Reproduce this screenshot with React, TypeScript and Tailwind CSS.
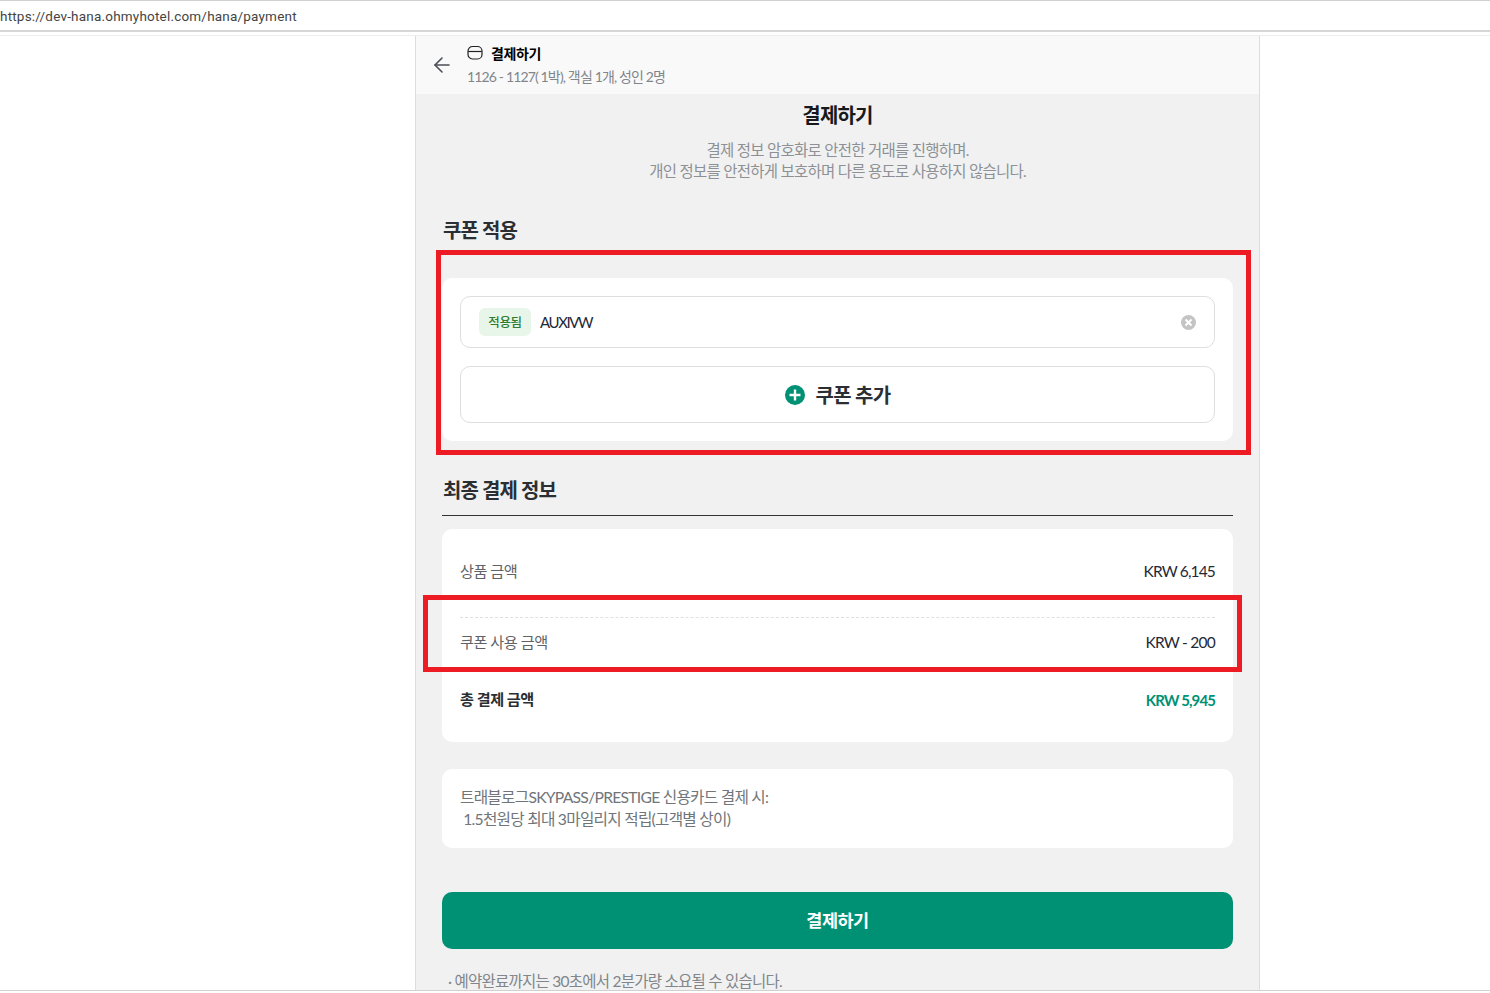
import React from 'react';
import { ArrowLeft } from 'lucide-react';

const font = "font-['Lato','Noto_Sans_CJK_KR',sans-serif]";

const App = () => {
  return (
    <div className={`relative h-[993px] overflow-hidden bg-white ${font}`}>
      {/* address bar */}
      <div className="h-[32px] border-t border-b-2 border-t-[#d0d0d0] border-b-[#d6d6d6] flex items-center pt-[1px]">
        <span className="text-[13.5px] text-[#444] font-['Roboto',sans-serif] tracking-[0.2px]">https://dev-hana.ohmyhotel.com/hana/payment</span>
      </div>
      <div className="h-[4px] border-b border-[#eeeeee]" />

      <div className="w-[845px] ml-[415px] h-[954px] border-x border-[#dcdcdc] bg-[#f1f1f1] overflow-hidden">
        {/* header */}
        <header className="h-[58px] bg-[#f9f9f9] flex items-center pl-[14px]">
          <ArrowLeft size={24} strokeWidth={1.6} className="text-[#4a4f54]" />
          <div className="ml-[13px]">
            <div className="flex items-center gap-[8px] h-[20px]">
              <svg width="16" height="16" viewBox="0 0 16 16" fill="none" stroke="#222" strokeWidth="1.2" className="mt-[-1px]">
                <rect x="1" y="1.5" width="14" height="12.5" rx="4.5" />
                <path d="M1.2 6.5h13.6" />
              </svg>
              <span className="text-[14px] font-bold text-black tracking-[-0.4px]">결제하기</span>
            </div>
            <div className="text-[14px] text-[#80868b] tracking-[-0.85px] mt-[4px] leading-[20px]">1126 - 1127( 1박), 객실 1개, 성인 2명</div>
          </div>
        </header>

        <main className="px-[26px]">
          <h1 className="text-center text-[20px] font-bold text-[#17191c] tracking-[-0.8px] leading-[28px] mt-[7px]">결제하기</h1>
          <p className="text-center text-[15.5px] leading-[21px] text-[#8d9196] tracking-[-0.75px] mt-[11px]">
            결제 정보 암호화로 안전한 거래를 진행하며.
            <br />
            개인 정보를 안전하게 보호하며 다른 용도로 사용하지 않습니다.
          </p>

          <h2 className="text-[20px] font-bold text-[#2b2f33] tracking-[-0.9px] leading-[28px] mt-[34px] ml-[1px]">쿠폰 적용</h2>
          <section className="bg-white rounded-[10px] mt-[34px] h-[163px] p-[18px] flex flex-col gap-[18px]">
            <div className="h-[52px] border border-[#dedede] rounded-[10px] flex items-center pl-[18px] pr-[18px]">
              <span className="h-[28px] w-[52px] rounded-[6px] bg-[#e8f5e9] text-[#2e7d32] text-[12.5px] font-medium flex items-center justify-center tracking-[-0.4px] pt-[3px]">적용됨</span>
              <span className="ml-[9px] text-[15px] text-[#1f2937] tracking-[-1.4px]">AUXIVW</span>
              <span className="ml-auto w-[15px] h-[15px] rounded-full bg-[#c4c4c4] flex items-center justify-center">
                <svg width="9" height="9" viewBox="0 0 9 9" stroke="white" strokeWidth="2">
                  <path d="M1.5 1.5l6 6M7.5 1.5l-6 6" />
                </svg>
              </span>
            </div>
            <button className="h-[57px] border border-[#dedede] rounded-[10px] flex items-center justify-center gap-[11px]">
              <svg width="20" height="20" viewBox="0 0 20 20">
                <circle cx="10" cy="10" r="10" fill="#009175" />
                <path d="M10 4.5v11M4.5 10h11" stroke="white" strokeWidth="2.4" />
              </svg>
              <span className="text-[20px] font-bold text-[#2b2f33] tracking-[-0.7px]">쿠폰 추가</span>
            </button>
          </section>

          <h2 className="text-[20px] font-bold text-[#2b2f33] tracking-[-0.9px] leading-[28px] mt-[35px] ml-[1px]">최종 결제 정보</h2>
          <div className="border-b border-[#333] mt-[11px]" />

          <section className="bg-white rounded-[10px] mt-[13px] h-[213px] px-[18px] flex flex-col">
            <div className="h-[89px] border-b border-dashed border-[#e0e0e0] flex items-center justify-between pb-[3px]">
              <span className="text-[15.2px] text-[#5f6368] tracking-[-0.5px]">상품 금액</span>
              <span className="text-[15.5px] text-[#1f2937] tracking-[-0.85px]">KRW 6,145</span>
            </div>
            <div className="h-[49px] flex items-center justify-between">
              <span className="text-[15.2px] text-[#5f6368] tracking-[-0.5px]">쿠폰 사용 금액</span>
              <span className="text-[15.5px] text-[#1f2937] tracking-[-0.75px]">KRW - 200</span>
            </div>
            <div className="h-[66px] flex items-center justify-between">
              <span className="text-[15.2px] font-bold text-[#2b2f33] tracking-[-0.5px] mt-[-1px]">총 결제 금액</span>
              <span className="text-[15px] font-bold text-[#009175] tracking-[-0.9px] mt-[1px]">KRW 5,945</span>
            </div>
          </section>

          <section className="bg-white rounded-[10px] mt-[27px] h-[79px] px-[18px] flex flex-col justify-center">
            <p className="text-[15.7px] leading-[22px] text-[#70757a] tracking-[-0.75px] mt-[-2px]">
              트래블로그SKYPASS/PRESTIGE 신용카드 결제 시:
              <br />
              &nbsp;1.5천원당 최대 3마일리지 적립(고객별 상이)
            </p>
          </section>

          <button className="w-full h-[57px] mt-[44px] pt-[1px] rounded-[10px] bg-[#009175] text-white text-[17.5px] font-bold tracking-[-0.5px]">결제하기</button>

          <p className="text-[15.5px] text-[#80868b] tracking-[-0.75px] mt-[22px] ml-[6px] leading-[21px]">· 예약완료까지는 30초에서 2분가량 소요될 수 있습니다.</p>
        </main>
      </div>

      <div className="absolute left-0 right-0 bottom-0 h-[3px] bg-white border-t border-[#d0d0d0]" />

      {/* red annotation boxes */}
      <div className="absolute left-[436px] top-[250px] w-[815px] h-[205px] border-[5px] border-[#ed1c24]" />
      <div className="absolute left-[423px] top-[595px] w-[819px] h-[77px] border-[5px] border-[#ed1c24]" />
    </div>
  );
};

export default App;
